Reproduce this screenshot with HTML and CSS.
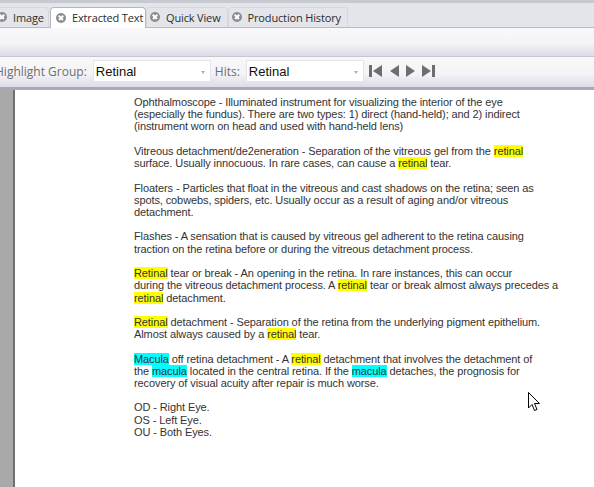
FILE: index.html
```html
<!DOCTYPE html>
<html>
<head>
<meta charset="utf-8">
<link rel="stylesheet" href="styles.css">
</head>
<body>
<div class="app">
  <div class="tabstrip">
    <div class="tab tab-cut"><span class="close"></span><span class="label">Image</span></div>
    <div class="tab active"><span class="close"></span><span class="label">Extracted Text</span></div>
    <div class="tab"><span class="close"></span><span class="label">Quick View</span></div>
    <div class="tab"><span class="close"></span><span class="label">Production History</span></div>
  </div>
  <div class="toolbar"></div>
  <div class="toolbar hl">
    <span class="tlabel first">Highlight Group:</span>
    <div class="combo"><span>Retinal</span><span class="arrow"></span></div>
    <span class="tlabel">Hits:</span>
    <div class="combo"><span>Retinal</span><span class="arrow"></span></div>
    <div class="nav">
      <svg width="15" height="14" viewBox="0 0 15 14"><rect x="0" y="1" width="3" height="12" fill="#6e6e6e"/><polygon points="13,1 13,13 4,7" fill="#6e6e6e"/></svg>
      <svg width="11" height="14" viewBox="0 0 11 14"><polygon points="10,1 10,13 1,7" fill="#6e6e6e"/></svg>
      <svg width="11" height="14" viewBox="0 0 11 14"><polygon points="1,1 1,13 10,7" fill="#6e6e6e"/></svg>
      <svg width="16" height="14" viewBox="0 0 16 14"><polygon points="1,1 1,13 10,7" fill="#6e6e6e"/><rect x="11" y="1" width="3" height="12" fill="#6e6e6e"/></svg>
    </div>
  </div>
  <div class="doc">
    <div class="gutter"></div>
    <div class="page">
      <p>Ophthalmoscope - Illuminated instrument for visualizing the interior of the eye<br>(especially the fundus). There are two types: 1) direct (hand-held); and 2) indirect<br>(instrument worn on head and used with hand-held lens)</p>
      <p>Vitreous detachment/de2eneration - Separation of the vitreous gel from the <span class="y">retinal</span><br>surface. Usually innocuous. In rare cases, can cause a <span class="y">retinal</span> tear.</p>
      <p>Floaters - Particles that float in the vitreous and cast shadows on the retina; seen as<br>spots, cobwebs, spiders, etc. Usually occur as a result of aging and/or vitreous<br>detachment.</p>
      <p>Flashes - A sensation that is caused by vitreous gel adherent to the retina causing<br>traction on the retina before or during the vitreous detachment process.</p>
      <p><span class="y">Retinal</span> tear or break - An opening in the retina. In rare instances, this can occur<br>during the vitreous detachment process. A <span class="y">retinal</span> tear or break almost always precedes a<br><span class="y">retinal</span> detachment.</p>
      <p><span class="y">Retinal</span> detachment - Separation of the retina from the underlying pigment epithelium.<br>Almost always caused by a <span class="y">retinal</span> tear.</p>
      <p><span class="c">Macula</span> off retina detachment - A <span class="y">retinal</span> detachment that involves the detachment of<br>the <span class="c">macula</span> located in the central retina. If the <span class="c">macula</span> detaches, the prognosis for<br>recovery of visual acuity after repair is much worse.</p>
      <p>OD - Right Eye.<br>OS - Left Eye.<br>OU - Both Eyes.</p>
    </div>
  </div>
  <svg class="cursor" width="14" height="21" viewBox="0 0 14 21"><path d="M0.5 0.5 L0.5 16 L4 12.5 L6.5 18.5 L9 17.5 L6.5 11.5 L11.5 11.5 Z" fill="#fff" stroke="#000" stroke-width="1" stroke-linejoin="miter"/></svg>
</div>
</body>
</html>
```
FILE: styles.css
```css
html, body {
  margin: 0;
  padding: 0;
  background: #ffffff;
}
.app {
  position: relative;
  width: 594px;
  height: 487px;
  overflow: hidden;
  font-family: "Open Sans", "Liberation Sans", sans-serif;
}
.tabstrip {
  height: 28px;
  box-sizing: border-box;
  background: #e3e5ea;
  border-top: 3px solid #c7c9d0;
  border-bottom: 1px solid #b9bbc4;
  display: flex;
  align-items: flex-end;
  padding-left: 0;
}
.tab {
  height: 20px;
  display: flex;
  align-items: center;
  padding: 0 6px 1px 3px;
  box-sizing: border-box;
  border: 1px solid #d6d8de;
  border-bottom: none;
  border-radius: 4px 4px 0 0;
  font-size: 11px;
  color: #2d2d2d;
  margin-right: 0;
}
.tab-cut {
  margin-left: -7px;
  width: 56px;
}
.tab.active {
  background: #ffffff;
  border-color: #b4b6be;
  height: 21px;
  margin-bottom: -1px;
  width: 96px;
  padding-left: 5px;
  margin-left: 1px;
}
.close {
  width: 10px;
  height: 10px;
  border-radius: 50%;
  background: #8c8c8e;
  position: relative;
  margin-right: 6px;
  flex: none;
}
.close::before, .close::after {
  content: "";
  position: absolute;
  left: 2px;
  top: 4.25px;
  width: 6px;
  height: 1.5px;
  background: #ffffff;
  transform: rotate(45deg);
}
.close::after {
  transform: rotate(-45deg);
}
.label {
  white-space: nowrap;
  letter-spacing: -0.15px;
}
.toolbar {
  height: 29px;
  box-sizing: border-box;
  background: linear-gradient(#f8f8fa 0%, #f4f4f7 55%, #dcdbea 100%);
  border-bottom: 1px solid #c6c7cf;
}
.toolbar.hl {
  height: 33px;
  display: flex;
  align-items: center;
  border-bottom: 3px solid #a9aab0;
  padding-bottom: 2px;
}
.tlabel {
  font-size: 12px;
  color: #6d6d6d;
  margin: 0 6px 0 4px;
  white-space: nowrap;
}
.tlabel.first {
  margin-left: -5px;
  margin-right: 6px;
}
.combo {
  width: 118px;
  height: 22px;
  box-sizing: border-box;
  background: #ffffff;
  border: 1px solid #e4e4ea;
  display: flex;
  align-items: center;
  justify-content: space-between;
  padding: 0 5px 0 2px;
  font-family: "Liberation Sans", Arial, sans-serif;
  font-size: 13px;
  color: #111;
}
.arrow {
  width: 0;
  height: 0;
  border-left: 2.5px solid transparent;
  border-right: 2.5px solid transparent;
  border-top: 3px solid #b0b0b0;
  margin-top: 2px;
}
.nav {
  display: flex;
  align-items: center;
  gap: 5px;
  margin-left: 5px;
}
.nav svg {
  display: block;
}
.doc {
  display: flex;
  height: 397px;
}
.gutter {
  width: 13px;
  background: #a9a9a9;
  border-right: 2px solid #6f6f6f;
  flex: none;
}
.page {
  padding: 6px 0 0 119px;
  font-family: "Liberation Sans", Arial, sans-serif;
  font-size: 11px;
  line-height: 12.22px;
  letter-spacing: -0.1px;
  color: #333333;
  white-space: nowrap;
}
.page p {
  margin: 0 0 12.22px 0;
}
.y {
  background: #ffff00;
}
.c {
  background: #00ffff;
}
.cursor {
  position: absolute;
  left: 528px;
  top: 392px;
}
```
